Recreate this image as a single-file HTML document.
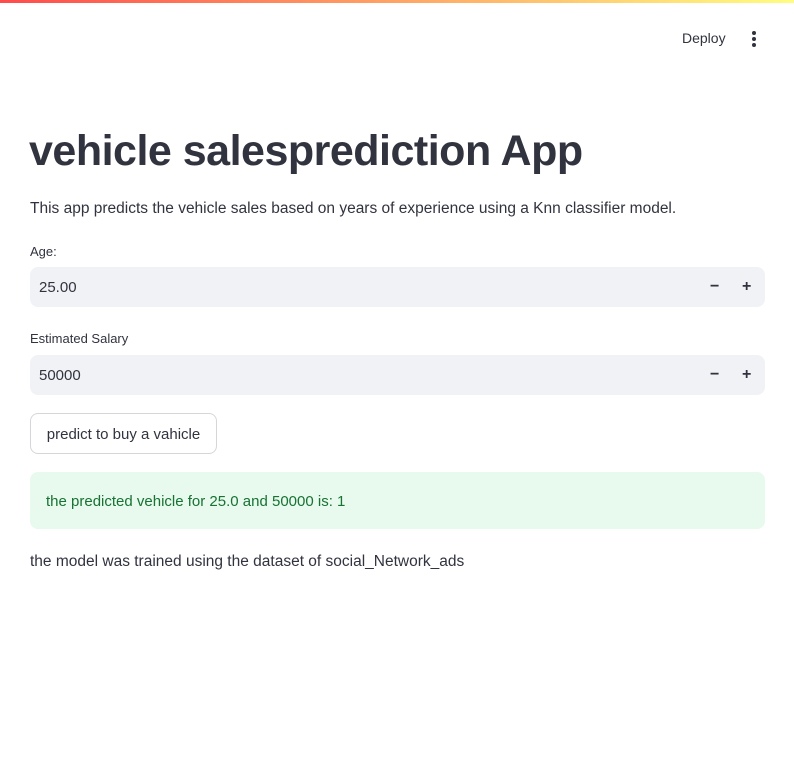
<!DOCTYPE html>
<html><head><style>
body{margin:0;width:794px;height:764px;background:#fff;font-family:"Liberation Sans",sans-serif;color:#31333f;position:relative;overflow:hidden}
.bar{position:absolute;top:0;left:0;width:794px;height:3px;background:linear-gradient(90deg,#ff4b4b,#fffd80)}
.abs{position:absolute;white-space:nowrap}
.inp{position:absolute;left:30px;width:735px;height:40px;background:#f0f2f6;border-radius:8px}
.inp span{position:absolute;left:9px;top:12px;font-size:15px}
.pm{position:absolute;top:11px;font-size:16px;font-weight:bold}
</style></head><body>
<div class="bar"></div>
<div class="abs" style="left:682px;top:30px;font-size:14px">Deploy</div>
<div class="abs" style="left:752px;top:31px;width:4px">
<div style="width:4px;height:4px;border-radius:2px;background:#31333f;margin-bottom:2px"></div>
<div style="width:4px;height:4px;border-radius:2px;background:#31333f;margin-bottom:2px"></div>
<div style="width:4px;height:4px;border-radius:2px;background:#31333f"></div></div>
<div class="abs" style="left:29px;top:127px;font-size:43px;font-weight:bold;letter-spacing:-0.5px">vehicle salesprediction App</div>
<div class="abs" style="left:30px;top:200px;font-size:15.5px">This app predicts the vehicle sales based on years of experience using a Knn classifier model.</div>
<div class="abs" style="left:30px;top:244px;font-size:13px">Age:</div>
<div class="inp" style="top:267px"><span>25.00</span><div class="pm" style="left:680px">−</div><div class="pm" style="left:712px">+</div></div>
<div class="abs" style="left:30px;top:331px;font-size:13px">Estimated Salary</div>
<div class="inp" style="top:355px"><span>50000</span><div class="pm" style="left:680px">−</div><div class="pm" style="left:712px">+</div></div>
<div class="abs" style="left:30px;top:413px;width:185px;height:39px;border:1px solid #d6d6d9;border-radius:8px;font-size:15px;line-height:41px;text-align:center">predict to buy a vahicle</div>
<div class="abs" style="left:30px;top:472px;width:735px;height:57px;background:#e8f9ee;border-radius:8px"></div>
<div class="abs" style="left:46px;top:493px;font-size:15px;color:#177233">the predicted vehicle for 25.0 and 50000 is: 1</div>
<div class="abs" style="left:30px;top:553px;font-size:15.5px">the model was trained using the dataset of social_Network_ads</div>
</body></html>
